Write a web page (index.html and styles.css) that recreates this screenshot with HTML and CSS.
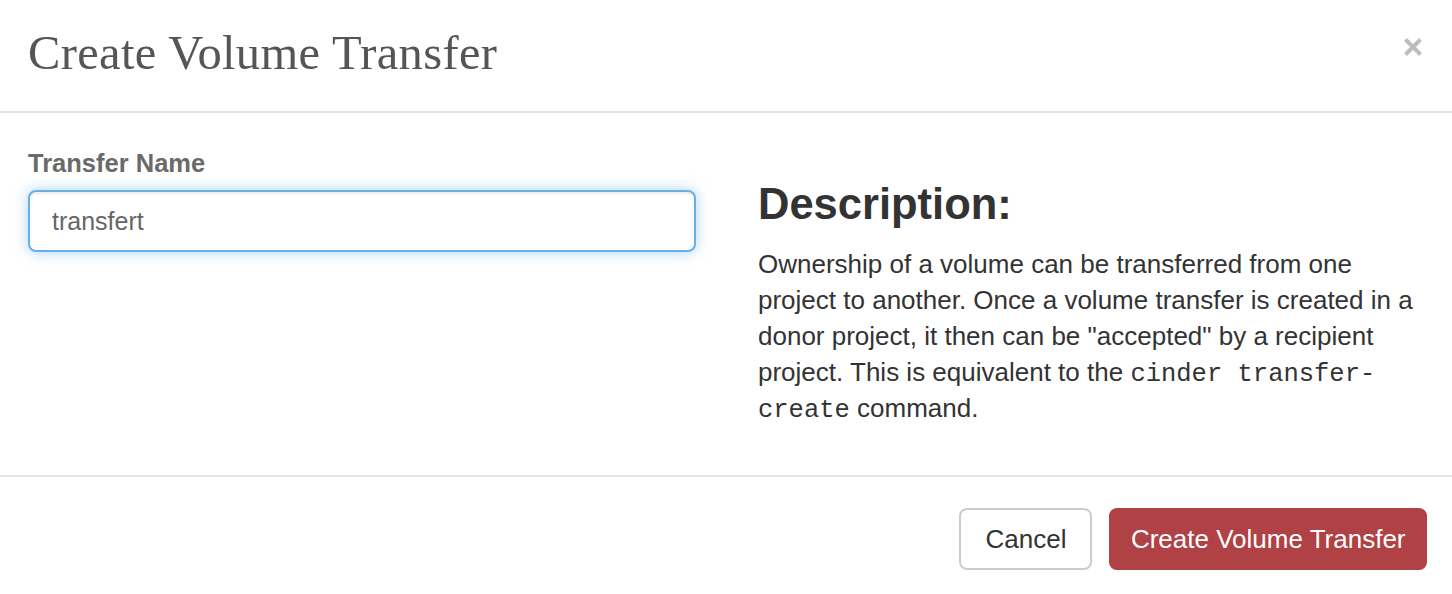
FILE: index.html
```html
<!DOCTYPE html>
<html lang="en">
<head>
<meta charset="utf-8">
<title>Create Volume Transfer</title>
<link rel="stylesheet" href="styles.css">
</head>
<body>
<div class="modal">
  <div class="modal-header">
    <h4 class="modal-title">Create Volume Transfer</h4>
    <button class="close" type="button" aria-label="Close">
      <svg width="20" height="20" viewBox="0 0 20 20"><path d="M2.5 2.5 L17.5 17.5 M17.5 2.5 L2.5 17.5" stroke="#bdbdbd" stroke-width="4" stroke-linecap="butt" fill="none"/></svg>
    </button>
  </div>
  <div class="modal-body">
    <div class="col-left">
      <label class="control-label" for="name">Transfer Name</label>
      <input id="name" class="form-control" type="text" value="transfert">
    </div>
    <div class="col-right">
      <h3 class="desc-title">Description:</h3>
      <p class="desc">Ownership of a volume can be transferred from one project to another. Once a volume transfer is created in a donor project, it then can be "accepted" by a recipient project. This is equivalent to the <code>cinder transfer-create</code> command.</p>
    </div>
  </div>
  <div class="modal-footer">
    <button class="btn btn-default" type="button">Cancel</button>
    <button class="btn btn-primary" type="button">Create Volume Transfer</button>
  </div>
</div>
</body>
</html>
```

FILE: styles.css
```css
html, body {
  margin: 0;
  padding: 0;
  background: #ffffff;
}

body {
  font-family: "Liberation Sans", Arial, sans-serif;
  color: #333333;
}

.modal {
  width: 1452px;
  height: 594px;
  overflow: hidden;
}

.modal-header {
  display: flex;
  align-items: flex-start;
  justify-content: space-between;
  padding: 26px 28px 32px 28px;
  border-bottom: 2px solid #e5e5e5;
}

.modal-title {
  margin: 0;
  font-family: "Liberation Serif", "Times New Roman", serif;
  font-weight: normal;
  font-size: 48.5px;
  line-height: 53px;
  color: #555555;
  letter-spacing: 0.35px;
}

.close {
  margin: 11px 1px 0 0;
  padding: 0;
  border: 0;
  background: transparent;
  width: 20px;
  height: 20px;
  line-height: 0;
  cursor: pointer;
}

.modal-body {
  display: grid;
  grid-template-columns: 668px 667px;
  column-gap: 62px;
  padding: 32px 27px 32px 28px;
}

.control-label {
  display: block;
  font-weight: bold;
  font-size: 25.5px;
  line-height: 36px;
  color: #6a6a6a;
  margin-bottom: 9px;
}

.form-control {
  display: block;
  box-sizing: border-box;
  width: 668px;
  height: 62px;
  padding: 0 22px;
  font-family: "Liberation Sans", Arial, sans-serif;
  font-size: 25px;
  color: #666666;
  background: #ffffff;
  border: 2px solid #66afe9;
  border-radius: 8px;
  outline: none;
  box-shadow: inset 0 2px 2px rgba(0, 0, 0, 0.075), 0 0 14px rgba(102, 175, 233, 0.55);
}

.desc-title {
  margin: 36px 0 18px 0;
  font-size: 43.5px;
  line-height: 47px;
  font-weight: bold;
  color: #333333;
}

.desc {
  margin: 0 0 17px 0;
  font-size: 26px;
  line-height: 36px;
  color: #333333;
}

.desc code {
  font-family: "Liberation Mono", "Courier New", monospace;
  font-size: 25.5px;
  line-height: 1;
  color: #333333;
  background: transparent;
  padding: 0;
}

.modal-footer {
  display: flex;
  justify-content: flex-end;
  align-items: center;
  gap: 17px;
  padding: 31px 25px 0 0;
  border-top: 2px solid #e5e5e5;
}

.btn {
  box-sizing: border-box;
  height: 62px;
  font-family: "Liberation Sans", Arial, sans-serif;
  font-size: 26px;
  border-radius: 8px;
  cursor: pointer;
}

.btn-default {
  padding: 0 24px;
  background: #ffffff;
  color: #333333;
  border: 2px solid #cccccc;
}

.btn-primary {
  padding: 0 19.5px;
  background: #b04144;
  color: #ffffff;
  border: 2px solid #b04144;
}
```
